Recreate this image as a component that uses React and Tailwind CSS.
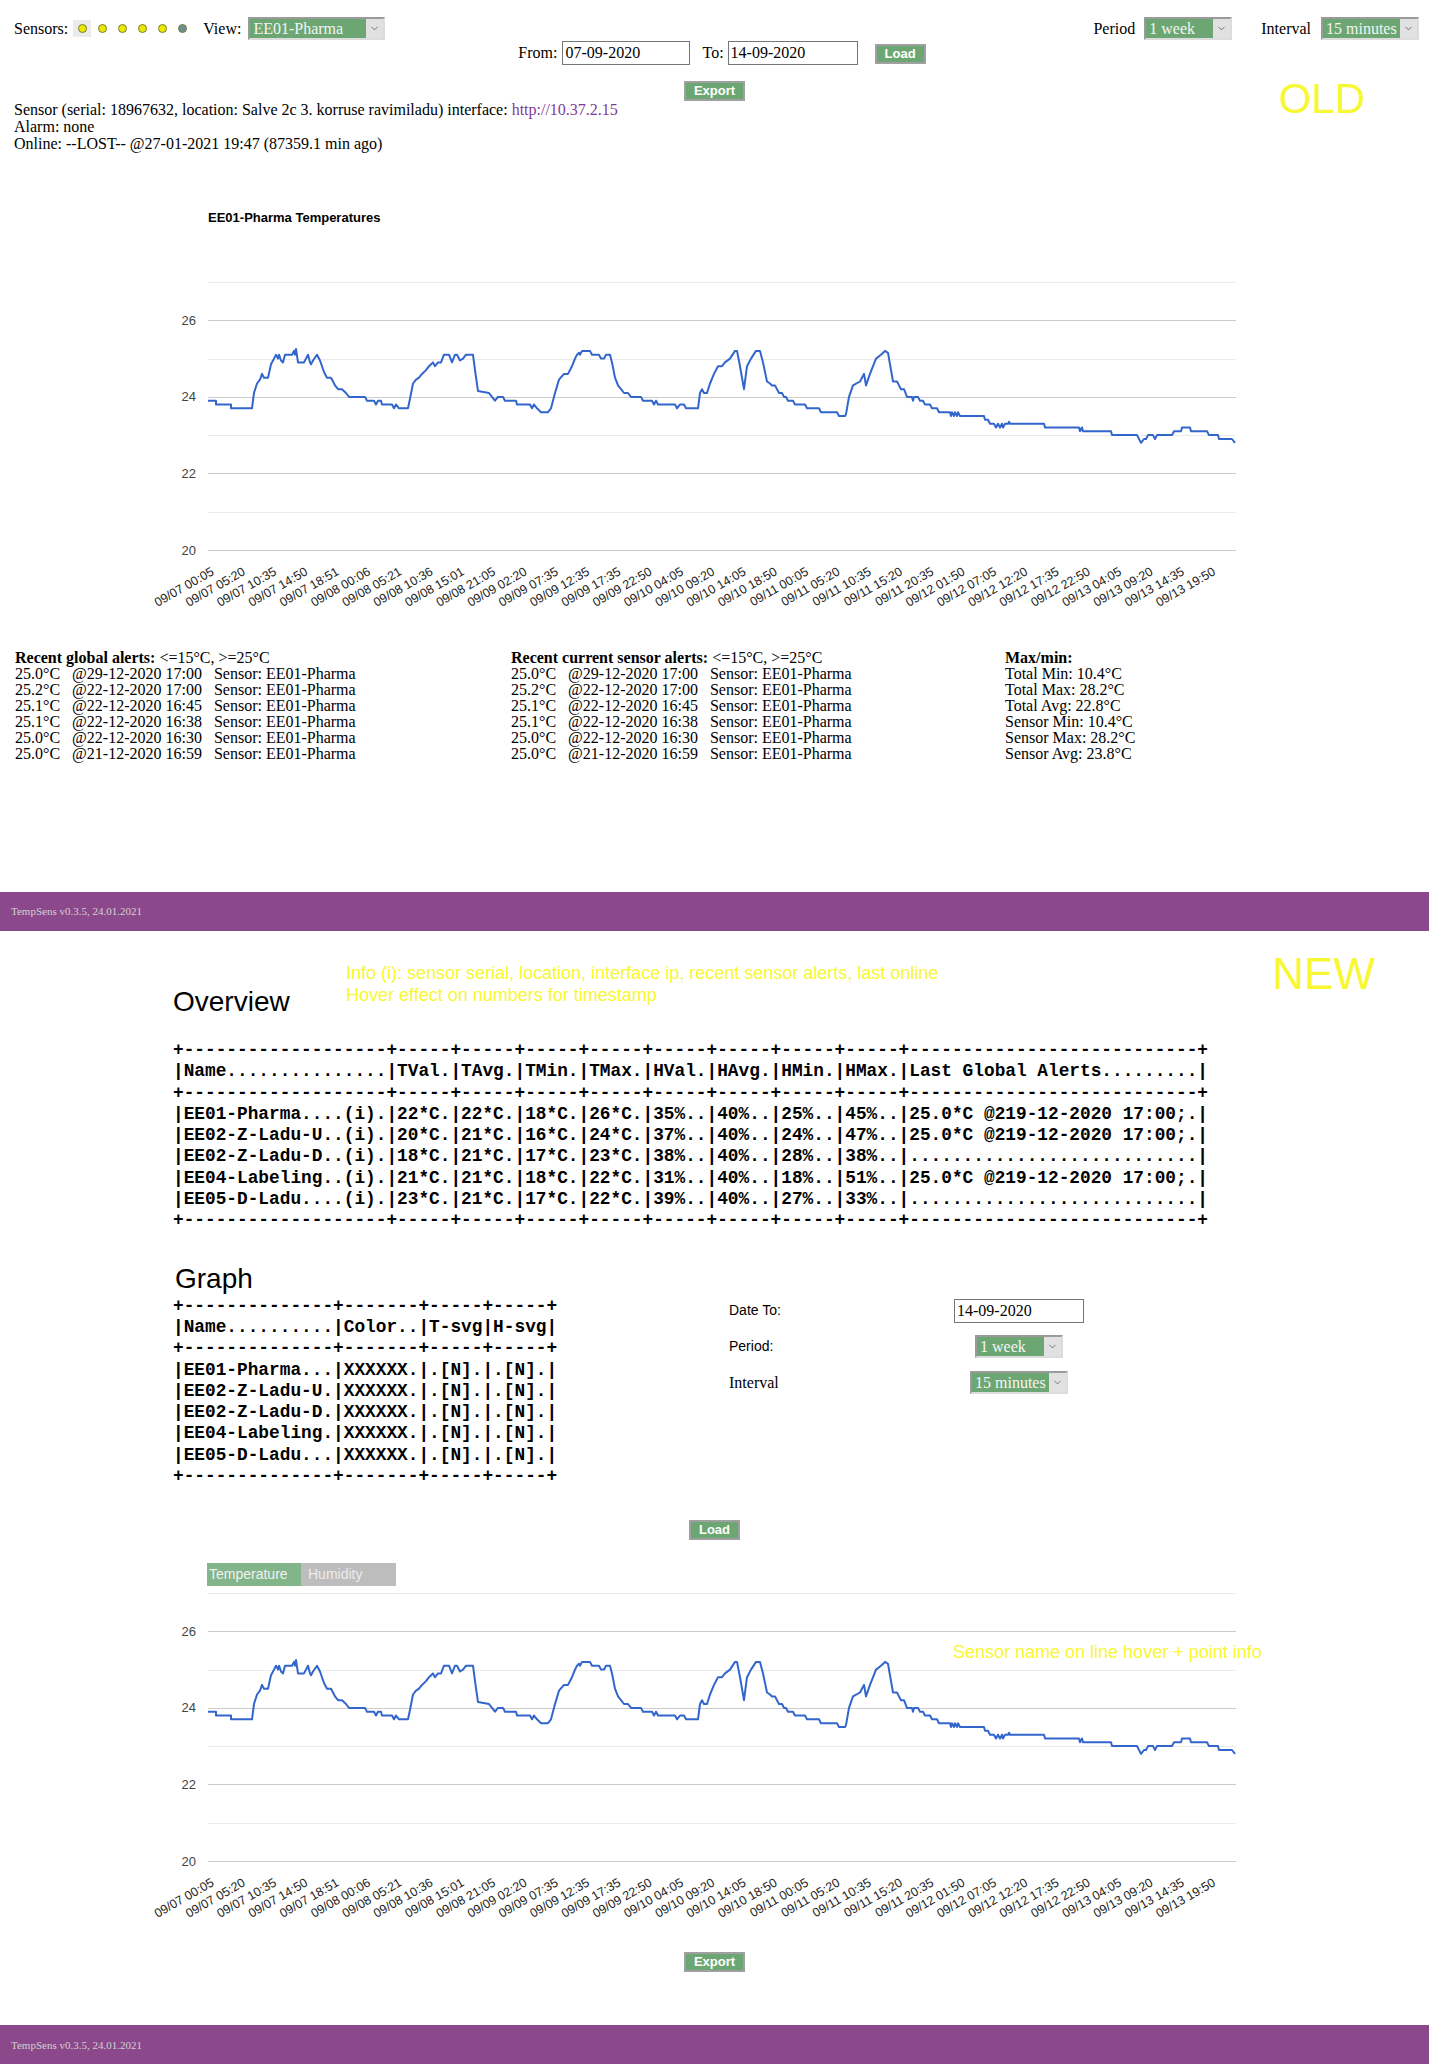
import { ChevronDown } from 'lucide-react';

const xLabels = [
  '09/07 00:05', '09/07 05:20', '09/07 10:35', '09/07 14:50', '09/07 18:51', '09/08 00:06',
  '09/08 05:21', '09/08 10:36', '09/08 15:01', '09/08 21:05', '09/09 02:20', '09/09 07:35',
  '09/09 12:35', '09/09 17:35', '09/09 22:50', '09/10 04:05', '09/10 09:20', '09/10 14:05',
  '09/10 18:50', '09/11 00:05', '09/11 05:20', '09/11 10:35', '09/11 15:20', '09/11 20:35',
  '09/12 01:50', '09/12 07:05', '09/12 12:20', '09/12 17:35', '09/12 22:50', '09/13 04:05',
  '09/13 09:20', '09/13 14:35', '09/13 19:50',
];

// x in page px, value in °C
const points = [
  [208, 23.9], [216, 23.9], [216, 23.8], [231, 23.8], [231, 23.7], [252, 23.7], [254, 24.1], [257, 24.35],
  [260, 24.45], [262, 24.6], [264, 24.5], [268, 24.5], [271, 24.85], [274, 25.0], [276, 25.1], [278, 25.0],
  [279, 25.1], [281, 24.95], [283, 24.9], [285, 25.1], [292, 25.1], [294, 25.2], [295, 25.1], [296, 25.25],
  [298, 24.9], [304, 24.9], [308, 25.1], [310, 24.9], [311, 24.85], [313, 24.95], [317, 25.1], [320, 24.95],
  [324, 24.65], [327, 24.5], [331, 24.5], [333, 24.4], [335, 24.3], [338, 24.2], [342, 24.2], [346, 24.1],
  [349, 24.0], [365, 24.0], [367, 23.9], [374, 23.9], [376, 23.8], [378, 23.9], [381, 23.9], [382, 23.8],
  [392, 23.8], [394, 23.7], [396, 23.8], [399, 23.7], [408, 23.7], [410, 23.95], [413, 24.35], [416, 24.45],
  [419, 24.5], [422, 24.6], [426, 24.7], [429, 24.8], [433, 24.9], [435, 24.8], [438, 24.9], [441, 24.9],
  [444, 25.1], [449, 25.1], [452, 24.9], [455, 25.1], [457, 25.1], [460, 24.95], [463, 25.0], [466, 25.1],
  [473, 25.1], [475, 24.7], [478, 24.15], [489, 24.1], [492, 24.0], [495, 23.9], [498, 24.0], [503, 24.0],
  [505, 23.9], [516, 23.9], [517, 23.8], [530, 23.8], [532, 23.7], [534, 23.8], [537, 23.7], [541, 23.6],
  [548, 23.6], [551, 23.7], [555, 24.1], [559, 24.45], [564, 24.6], [568, 24.6], [572, 24.8], [575, 25.0],
  [577, 25.1], [579, 25.15], [580, 25.1], [582, 25.2], [590, 25.2], [592, 25.1], [599, 25.1], [601, 25.0],
  [604, 25.0], [606, 25.1], [610, 25.1], [612, 24.9], [615, 24.5], [618, 24.3], [621, 24.2], [624, 24.1],
  [628, 24.1], [631, 24.0], [641, 24.0], [643, 23.9], [652, 23.9], [654, 23.8], [656, 23.9], [658, 23.8],
  [675, 23.8], [677, 23.7], [680, 23.8], [684, 23.8], [686, 23.7], [698, 23.7], [700, 24.1], [702, 24.2],
  [704, 24.1], [707, 24.1], [710, 24.35], [714, 24.6], [718, 24.8], [722, 24.8], [725, 24.9], [730, 25.0],
  [735, 25.2], [737, 25.2], [740, 24.8], [744, 24.2], [747, 24.8], [751, 25.0], [756, 25.2], [760, 25.2],
  [763, 24.9], [767, 24.4], [770, 24.35], [772, 24.3], [775, 24.3], [777, 24.2], [779, 24.1], [782, 24.1],
  [784, 24.0], [786, 24.0], [788, 23.9], [793, 23.9], [795, 23.8], [805, 23.8], [807, 23.7], [819, 23.7],
  [821, 23.6], [837, 23.6], [839, 23.5], [845, 23.5], [846, 23.55], [849, 24.0], [853, 24.3], [860, 24.4],
  [864, 24.6], [866, 24.3], [870, 24.6], [876, 25.0], [881, 25.1], [885, 25.2], [888, 25.15], [893, 24.4],
  [897, 24.4], [899, 24.3], [901, 24.2], [904, 24.2], [907, 24.0], [912, 24.0], [913, 23.9], [914, 24.0],
  [918, 24.0], [920, 23.9], [923, 23.9], [925, 23.8], [930, 23.8], [932, 23.7], [937, 23.7], [939, 23.6],
  [950, 23.6], [951, 23.5], [952, 23.6], [954, 23.5], [955, 23.6], [957, 23.5], [958, 23.6], [960, 23.5],
  [984, 23.5], [985, 23.4], [988, 23.4], [990, 23.3], [994, 23.3], [996, 23.2], [998, 23.3], [1000, 23.2],
  [1002, 23.3], [1003, 23.2], [1005, 23.3], [1008, 23.3], [1009, 23.35], [1010, 23.3], [1044, 23.3],
  [1045, 23.2], [1079, 23.2], [1080, 23.1], [1082, 23.2], [1083, 23.1], [1111, 23.1], [1112, 23.0],
  [1137, 23.0], [1141, 22.8], [1144, 22.9], [1146, 22.9], [1148, 23.0], [1153, 23.0], [1155, 22.9],
  [1157, 23.0], [1172, 23.0], [1174, 23.1], [1181, 23.1], [1182, 23.2], [1190, 23.2], [1191, 23.1],
  [1207, 23.1], [1209, 23.0], [1218, 23.0], [1219, 22.9], [1232, 22.9], [1235, 22.8],
];

const alerts = [
  ['25.0°C', '@29-12-2020 17:00'],
  ['25.2°C', '@22-12-2020 17:00'],
  ['25.1°C', '@22-12-2020 16:45'],
  ['25.1°C', '@22-12-2020 16:38'],
  ['25.0°C', '@22-12-2020 16:30'],
  ['25.0°C', '@21-12-2020 16:59'],
];

const maxMin = [
  'Total Min: 10.4°C', 'Total Max: 28.2°C', 'Total Avg: 22.8°C',
  'Sensor Min: 10.4°C', 'Sensor Max: 28.2°C', 'Sensor Avg: 23.8°C',
];

const overviewTable = [
  '+-------------------+-----+-----+-----+-----+-----+-----+-----+-----+---------------------------+',
  '|Name...............|TVal.|TAvg.|TMin.|TMax.|HVal.|HAvg.|HMin.|HMax.|Last Global Alerts.........|',
  '+-------------------+-----+-----+-----+-----+-----+-----+-----+-----+---------------------------+',
  '|EE01-Pharma....(i).|22*C.|22*C.|18*C.|26*C.|35%..|40%..|25%..|45%..|25.0*C @219-12-2020 17:00;.|',
  '|EE02-Z-Ladu-U..(i).|20*C.|21*C.|16*C.|24*C.|37%..|40%..|24%..|47%..|25.0*C @219-12-2020 17:00;.|',
  '|EE02-Z-Ladu-D..(i).|18*C.|21*C.|17*C.|23*C.|38%..|40%..|28%..|38%..|...........................|',
  '|EE04-Labeling..(i).|21*C.|21*C.|18*C.|22*C.|31%..|40%..|18%..|51%..|25.0*C @219-12-2020 17:00;.|',
  '|EE05-D-Ladu....(i).|23*C.|21*C.|17*C.|22*C.|39%..|40%..|27%..|33%..|...........................|',
  '+-------------------+-----+-----+-----+-----+-----+-----+-----+-----+---------------------------+',
];

const graphTable = [
  '+--------------+-------+-----+-----+',
  '|Name..........|Color..|T-svg|H-svg|',
  '+--------------+-------+-----+-----+',
  '|EE01-Pharma...|XXXXXX.|.[N].|.[N].|',
  '|EE02-Z-Ladu-U.|XXXXXX.|.[N].|.[N].|',
  '|EE02-Z-Ladu-D.|XXXXXX.|.[N].|.[N].|',
  '|EE04-Labeling.|XXXXXX.|.[N].|.[N].|',
  '|EE05-D-Ladu...|XXXXXX.|.[N].|.[N].|',
  '+--------------+-------+-----+-----+',
];

const Select = ({ value, width }) => (
  <div
    className="flex h-[23px] border-2 border-t-[#9a9a9a] border-l-[#9a9a9a] border-b-[#dcdcdc] border-r-[#dcdcdc] bg-[#6ca773]"
    style={{ width }}
  >
    <span className="flex-1 pl-[3px] leading-[19px] text-[#f4f4f4] whitespace-nowrap overflow-hidden">{value}</span>
    <span className="flex w-[17px] items-center justify-center bg-[#e1e1e1]">
      <ChevronDown size={11} strokeWidth={1.5} className="text-[#444]" />
    </span>
  </div>
);

const GreenButton = ({ children }) => (
  <button className="h-[20px] border-2 border-[#a0a0a0] bg-[#6ca773] px-[8px] font-['Liberation_Sans',Arial,sans-serif] text-[13px] font-bold leading-[16px] text-white">
    {children}
  </button>
);

const Dot = ({ color, selected }) => (
  <span className={`flex h-[17px] w-[18px] items-center justify-center ${selected ? 'bg-[#ebebeb]' : ''}`}>
    <span className="h-[9px] w-[9px] rounded-full border border-[#7c7c3a]" style={{ background: color }} />
  </span>
);

const Chart = ({ height, y20, titleY }) => {
  const k = 268 / 7;
  const yOf = (v) => y20 - (v - 20) * k;
  const line = points.map(([x, v]) => `${x},${yOf(v).toFixed(1)}`).join(' ');
  return (
    <svg width="1429" height={height} className="block" fontFamily="'Liberation Sans', Arial, sans-serif">
      {titleY && (
        <text x="208" y={titleY} fontSize="13" fontWeight="bold" fill="#000">
          EE01-Pharma Temperatures
        </text>
      )}
      {[21, 23, 25, 27].map((v) => (
        <line key={v} x1="208" x2="1236" y1={Math.round(yOf(v)) + 0.5} y2={Math.round(yOf(v)) + 0.5} stroke="#ebebeb" />
      ))}
      {[20, 22, 24, 26].map((v) => (
        <g key={v}>
          <line x1="208" x2="1236" y1={Math.round(yOf(v)) + 0.5} y2={Math.round(yOf(v)) + 0.5} stroke="#cccccc" />
          <text x="196" y={yOf(v) + 4.5} textAnchor="end" fontSize="13" fill="#444">
            {v}
          </text>
        </g>
      ))}
      <polyline points={line} fill="none" stroke="#3366cc" strokeWidth="2" strokeLinejoin="round" />
      {xLabels.map((label, i) => {
        const x = 214.7 + i * 31.3;
        const y = y20 + 24;
        return (
          <text key={label} x={x} y={y} textAnchor="end" fontSize="12.5" fill="#222" transform={`rotate(-30 ${x} ${y})`}>
            {label}
          </text>
        );
      })}
    </svg>
  );
};

const AlertList = ({ title }) => (
  <div>
    <div>
      <b>{title}</b> {'<=15°C, >=25°C'}
    </div>
    {alerts.map(([val, at], i) => (
      <div key={i} className="whitespace-pre">{`${val}   ${at}   Sensor: EE01-Pharma`}</div>
    ))}
  </div>
);

const Footer = () => (
  <div className="flex h-[39px] items-center bg-[#8b488b] pl-[11px] text-[11px] text-[#d2d2d2]">
    TempSens v0.3.5, 24.01.2021
  </div>
);

export default function App() {
  return (
    <div className="w-[1429px] bg-white font-['Liberation_Serif','Times_New_Roman',serif] text-[16px] text-black">
      {/* OLD */}
      <div className="flex items-start justify-between pl-[14px] pr-[10px] pt-[17px]">
        <div className="flex h-[23px] items-center">
          <span>Sensors:</span>
          <div className="ml-[5px] flex gap-[2px]">
            <Dot color="#e8e800" selected />
            <Dot color="#e8e800" />
            <Dot color="#e8e800" />
            <Dot color="#e8e800" />
            <Dot color="#e8e800" />
            <Dot color="#6f8f8f" />
          </div>
          <span className="ml-[12px]">View:</span>
          <div className="ml-[7px]">
            <Select value="EE01-Pharma" width={137} />
          </div>
        </div>
        <div className="flex h-[23px] items-center">
          <span>Period</span>
          <div className="ml-[9px]">
            <Select value="1 week" width={88} />
          </div>
          <span className="ml-[29px]">Interval</span>
          <div className="ml-[10px]">
            <Select value="15 minutes" width={98} />
          </div>
        </div>
      </div>

      <div className="mt-[1px] flex items-center justify-center pl-[15px]">
        <span>From:</span>
        <input
          readOnly
          value="07-09-2020"
          className="ml-[5px] h-[24px] w-[128px] border border-[#767676] px-[2px] font-['Liberation_Serif',serif] text-[16px]"
        />
        <span className="ml-[12px]">To:</span>
        <input
          readOnly
          value="14-09-2020"
          className="ml-[4px] h-[24px] w-[130px] border border-[#767676] px-[2px] font-['Liberation_Serif',serif] text-[16px]"
        />
        <div className="ml-[17px]">
          <GreenButton>Load</GreenButton>
        </div>
      </div>

      <div className="mt-[16px] grid grid-cols-[1fr_auto_1fr] items-start">
        <div />
        <GreenButton>Export</GreenButton>
        <div className="mr-[64px] -mt-[3px] h-[20px] justify-self-end font-['Liberation_Sans',Arial,sans-serif] text-[42px] leading-none text-[#f7f733]">
          OLD
        </div>
      </div>

      <div className="pl-[14px] leading-[17px]">
        <div>
          Sensor (serial: 18967632, location: Salve 2c 3. korruse ravimiladu) interface:{' '}
          <a href="#" className="text-[#7d3c98]">http://10.37.2.15</a>
        </div>
        <div>Alarm: none</div>
        <div>Online: --LOST-- @27-01-2021 19:47 (87359.1 min ago)</div>
      </div>

      <Chart height={468} y20={398} titleY={69.5} />

      <div className="mt-[30px] grid grid-cols-[496px_494px_1fr] pl-[15px] leading-[16px]">
        <AlertList title="Recent global alerts:" />
        <AlertList title="Recent current sensor alerts:" />
        <div>
          <div>
            <b>Max/min:</b>
          </div>
          {maxMin.map((t) => (
            <div key={t}>{t}</div>
          ))}
        </div>
      </div>

      <div className="mt-[130px]">
        <Footer />
      </div>

      {/* NEW */}
      <div className="mt-[31px] flex items-start font-['Liberation_Sans',Arial,sans-serif]">
        <div className="w-[346px] pl-[173px] pt-[24px] text-[28px] leading-[32px]">Overview</div>
        <div className="text-[18px] leading-[22px] text-[#f7f733]">
          <div>Info (i): sensor serial, location, interface ip, recent sensor alerts, last online</div>
          <div>Hover effect on numbers for timestamp</div>
        </div>
        <div className="ml-auto mr-[54px] -mt-[10px] text-[44px] leading-none text-[#f7f733]">NEW</div>
      </div>

      <pre className="mt-[22px] pl-[173px] font-['Liberation_Mono','Courier_New',monospace] text-[17.8px] font-bold leading-[21.3px]">
        {overviewTable.join('\n')}
      </pre>

      <div className="mt-[31px] pl-[175px] font-['Liberation_Sans',Arial,sans-serif] text-[28px] leading-[32px]">Graph</div>

      <div className="flex items-start">
        <pre className="mt-[1px] w-[729px] pl-[173px] font-['Liberation_Mono','Courier_New',monospace] text-[17.8px] font-bold leading-[21.3px]">
          {graphTable.join('\n')}
        </pre>
        <div className="-mt-[2px] grid grid-cols-[190px_200px] grid-rows-[36px_36px_36px] items-center">
          <span className="font-['Liberation_Sans',Arial,sans-serif] text-[14px]">Date To:</span>
          <div className="flex justify-center">
            <input
              readOnly
              value="14-09-2020"
              className="h-[24px] w-[130px] border border-[#767676] px-[2px] font-['Liberation_Serif',serif] text-[16px]"
            />
          </div>
          <span className="font-['Liberation_Sans',Arial,sans-serif] text-[14px]">Period:</span>
          <div className="flex justify-center">
            <Select value="1 week" width={88} />
          </div>
          <span>Interval</span>
          <div className="flex justify-center">
            <Select value="15 minutes" width={98} />
          </div>
        </div>
      </div>

      <div className="mt-[33px] flex justify-center">
        <GreenButton>Load</GreenButton>
      </div>

      <div className="mt-[23px] flex pl-[207px] font-['Liberation_Sans',Arial,sans-serif] text-[14px] leading-[23px]">
        <div className="h-[23px] w-[94px] bg-[#82b58a] pl-[2px] text-[#f2f2f2]">Temperature</div>
        <div className="h-[23px] w-[95px] bg-[#bdbdbd] pl-[7px] text-[#ececec]">Humidity</div>
      </div>

      <div className="relative">
        <Chart height={352} y20={275} />
        <div className="absolute left-[953px] top-[55px] font-['Liberation_Sans',Arial,sans-serif] text-[18px] leading-[22px] text-[#f7f733]">
          Sensor name on line hover + point info
        </div>
      </div>

      <div className="mt-[14px] flex justify-center">
        <GreenButton>Export</GreenButton>
      </div>

      <div className="mt-[53px]">
        <Footer />
      </div>
    </div>
  );
}
